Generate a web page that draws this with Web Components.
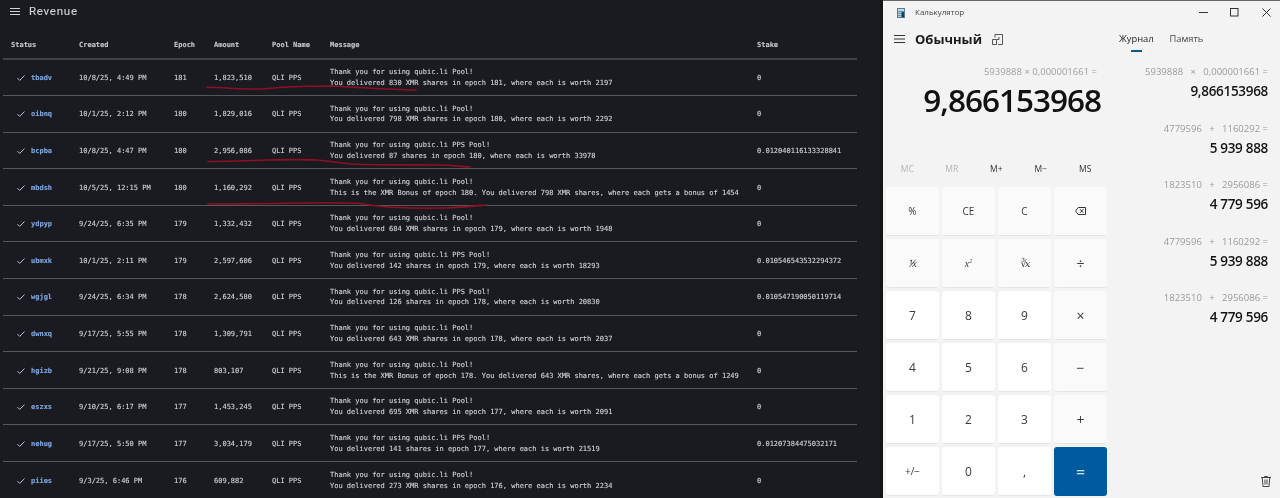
<!DOCTYPE html>
<html>
<head>
<meta charset="utf-8">
<title>Revenue</title>
<style>
  html, body { margin: 0; padding: 0; height: 100%; overflow: hidden; background: #141518; }
  body { display: flex; width: 1280px; height: 498px; }
</style>
</head>
<body>
<rev-panel>
  <rev-row status="tbadv" created="10/8/25, 4:49 PM" epoch="181" amount="1,823,510" stake="0">Thank you for using qubic.li Pool!<br>You delivered 830 XMR shares in epoch 181, where each is worth 2197</rev-row>
  <rev-row status="oibnq" created="10/1/25, 2:12 PM" epoch="180" amount="1,829,016" stake="0">Thank you for using qubic.li Pool!<br>You delivered 798 XMR shares in epoch 180, where each is worth 2292</rev-row>
  <rev-row status="bcpba" created="10/8/25, 4:47 PM" epoch="180" amount="2,956,086" stake="0.012040116133328841">Thank you for using qubic.li PPS Pool!<br>You delivered 87 shares in epoch 180, where each is worth 33978</rev-row>
  <rev-row status="mbdsh" created="10/5/25, 12:15 PM" epoch="180" amount="1,160,292" stake="0">Thank you for using qubic.li Pool!<br>This is the XMR Bonus of epoch 180. You delivered 798 XMR shares, where each gets a bonus of 1454</rev-row>
  <rev-row status="ydpyp" created="9/24/25, 6:35 PM" epoch="179" amount="1,332,432" stake="0">Thank you for using qubic.li Pool!<br>You delivered 684 XMR shares in epoch 179, where each is worth 1948</rev-row>
  <rev-row status="ubmxk" created="10/1/25, 2:11 PM" epoch="179" amount="2,597,606" stake="0.010546543532294372">Thank you for using qubic.li PPS Pool!<br>You delivered 142 shares in epoch 179, where each is worth 18293</rev-row>
  <rev-row status="wgjgl" created="9/24/25, 6:34 PM" epoch="178" amount="2,624,580" stake="0.010547190050119714">Thank you for using qubic.li PPS Pool!<br>You delivered 126 shares in epoch 178, where each is worth 20830</rev-row>
  <rev-row status="dwnxq" created="9/17/25, 5:55 PM" epoch="178" amount="1,309,791" stake="0">Thank you for using qubic.li Pool!<br>You delivered 643 XMR shares in epoch 178, where each is worth 2037</rev-row>
  <rev-row status="hgizb" created="9/21/25, 9:08 PM" epoch="178" amount="803,107" stake="0">Thank you for using qubic.li Pool!<br>This is the XMR Bonus of epoch 178. You delivered 643 XMR shares, where each gets a bonus of 1249</rev-row>
  <rev-row status="eszxs" created="9/10/25, 6:17 PM" epoch="177" amount="1,453,245" stake="0">Thank you for using qubic.li Pool!<br>You delivered 695 XMR shares in epoch 177, where each is worth 2091</rev-row>
  <rev-row status="nehug" created="9/17/25, 5:50 PM" epoch="177" amount="3,034,179" stake="0.01207384475032171">Thank you for using qubic.li PPS Pool!<br>You delivered 141 shares in epoch 177, where each is worth 21519</rev-row>
  <rev-row status="piies" created="9/3/25, 6:46 PM" epoch="176" amount="609,882" stake="0">Thank you for using qubic.li Pool!<br>You delivered 273 XMR shares in epoch 176, where each is worth 2234</rev-row>
</rev-panel>
<calc-panel>
  <calc-key kind="fn">%</calc-key>
  <calc-key kind="fn">CE</calc-key>
  <calc-key kind="fn">C</calc-key>
  <calc-key kind="fn"><svg width="11" height="8" viewBox="0 0 11 8" fill="none" stroke="#333" stroke-width="1"><path d="M3.2.5h7.3v7H3.2L.6 4z"/><path d="M5 2.2l3.4 3.6M8.4 2.2L5 5.8"/></svg></calc-key>
  <calc-key kind="fn"><span style="font:italic 10px 'Liberation Serif',serif">&#8543;x</span></calc-key>
  <calc-key kind="fn"><span style="font:italic 10px 'Liberation Serif',serif">x<sup style="font-size:6px;line-height:0">2</sup></span></calc-key>
  <calc-key kind="fn"><span style="font:italic 10px 'DejaVu Serif',serif;letter-spacing:-2px">&#8731;x</span></calc-key>
  <calc-key kind="op">&#247;</calc-key>
  <calc-key kind="num">7</calc-key>
  <calc-key kind="num">8</calc-key>
  <calc-key kind="num">9</calc-key>
  <calc-key kind="op">&#215;</calc-key>
  <calc-key kind="num">4</calc-key>
  <calc-key kind="num">5</calc-key>
  <calc-key kind="num">6</calc-key>
  <calc-key kind="op">&#8722;</calc-key>
  <calc-key kind="num">1</calc-key>
  <calc-key kind="num">2</calc-key>
  <calc-key kind="num">3</calc-key>
  <calc-key kind="op">+</calc-key>
  <calc-key kind="num"><span style="font-size:10px">+/&#8722;</span></calc-key>
  <calc-key kind="num">0</calc-key>
  <calc-key kind="num">,</calc-key>
  <calc-key kind="eq">=</calc-key>
  <calc-history slot="history" expr="5939888&#160;&#160;&#160;&#215;&#160;&#160;&#160;0,000001661 =" value="9,866153968"></calc-history>
  <calc-history slot="history" expr="4779596&#160;&#160;&#160;+&#160;&#160;&#160;1160292 =" value="5 939 888"></calc-history>
  <calc-history slot="history" expr="1823510&#160;&#160;&#160;+&#160;&#160;&#160;2956086 =" value="4 779 596"></calc-history>
  <calc-history slot="history" expr="4779596&#160;&#160;&#160;+&#160;&#160;&#160;1160292 =" value="5 939 888"></calc-history>
  <calc-history slot="history" expr="1823510&#160;&#160;&#160;+&#160;&#160;&#160;2956086 =" value="4 779 596"></calc-history>
</calc-panel>
<script>
const COLS = '68px 95px 40px 58px 58px 427px 108px';

class RevPanel extends HTMLElement {
  connectedCallback() {
    this.attachShadow({ mode: 'open' });
    this.shadowRoot.innerHTML = `
      <style>
        :host { display: block; position: relative; width: 880px; height: 498px; flex: none; background: #1a1b20;
          color: #cfd2d6; font: 7px "DejaVu Sans Mono", "Liberation Mono", monospace; -webkit-text-stroke: .12px currentColor;
          overflow: hidden; filter: blur(.3px); }
        .top { display: flex; align-items: center; gap: 9px; height: 22px; padding-left: 10px; }
        .top span { font: 11.5px Roboto, sans-serif; letter-spacing: .75px; color: #d0d3d7; }
        .head { display: grid; grid-template-columns: ${COLS}; align-items: center; box-sizing: border-box; height: 37.5px;
          margin: 0 23px 0 3px; padding-top: 11px; border-bottom: 2px solid #404246; color: #c4c7cb; font-weight: bold; }
        .head div { padding-left: 8px; }
        .marks { position: absolute; left: 0; top: 0; pointer-events: none; }
      </style>
      <div class="top">
        <svg width="10" height="7" viewBox="0 0 10 7"><path d="M0 .5h10M0 3.5h10M0 6.5h10" stroke="#d0d2d5" stroke-width="1"/></svg>
        <span>Revenue</span>
      </div>
      <div class="head">
        <div>Status</div><div>Created</div><div>Epoch</div><div>Amount</div><div>Pool Name</div><div>Message</div><div>Stake</div>
      </div>
      <slot></slot>
      <svg class="marks" width="880" height="498" fill="none" stroke="#8f1024" stroke-width="1.6" stroke-linecap="round">
        <path d="M207 87.3C225 87.5 245 89.5 262 89C285 86.5 310 86 330 86C360 87.5 390 90 416 90"/>
        <path d="M208 161.5C230 161.5 250 160.5 267 160C290 159.5 305 159.5 317 160C335 161.5 345 164 353 164C385 165.5 420 164.5 440 165C455 165.5 462 166.5 470 167"/>
        <path d="M208 204C240 204 270 203.5 300 203C325 202.5 345 202.5 360 203.5C375 206 390 207.5 400 207.5C420 208.5 435 208 445 208C460 207.5 475 206 486 205"/>
      </svg>`;
  }
}

class RevRow extends HTMLElement {
  connectedCallback() {
    const a = n => this.getAttribute(n);
    this.attachShadow({ mode: 'open' });
    this.shadowRoot.innerHTML = `
      <style>
        :host { display: grid; grid-template-columns: ${COLS}; align-items: center; box-sizing: border-box;
          height: 36.6px; margin: 0 23px 0 3px; padding-top: 1px; border-bottom: 1px solid #55575b; }
        :host(:last-child) { border-bottom: 0; }
        .c { padding-left: 8px; white-space: nowrap; }
        .status { display: flex; align-items: center; gap: 6px; padding-left: 14px; color: #7fa6de; font-weight: bold; }
        .msg { line-height: 10.7px; }
      </style>
      <div class="c status"><svg width="8" height="6" viewBox="0 0 8 6" fill="none"><path d="M.5 3.2L2.7 5.4L7.5.6" stroke="#b9c8dc" stroke-width="1"/></svg>${a('status')}</div>
      <div class="c">${a('created')}</div>
      <div class="c">${a('epoch')}</div>
      <div class="c">${a('amount')}</div>
      <div class="c">QLI PPS</div>
      <div class="c msg"><slot></slot></div>
      <div class="c">${a('stake')}</div>`;
  }
}

class CalcKey extends HTMLElement {
  connectedCallback() {
    this.attachShadow({ mode: 'open' });
    this.shadowRoot.innerHTML = `
      <style>
        :host { display: flex; align-items: center; justify-content: center; box-sizing: border-box; border-radius: 3px;
          background: #fafafa; color: #3a3a3a; font: 10px "Open Sans", sans-serif; border-bottom: 1px solid #e4e4e4; }
        :host([kind=num]) { background: #fff; font-size: 12px; }
        :host([kind=op]) { font-size: 14px; }
        :host([kind=eq]) { background: #005a9e; color: #cfe3f2; font-size: 16px; border-bottom: 0; }
      </style>
      <slot></slot>`;
  }
}

class CalcHistory extends HTMLElement {
  connectedCallback() {
    this.attachShadow({ mode: 'open' });
    this.shadowRoot.innerHTML = `
      <style>
        :host { display: block; height: 56.5px; text-align: right; white-space: nowrap; }
        .e { font-size: 9.5px; line-height: 14px; color: #9a9a9a; }
        .v { font-size: 13.5px; font-weight: 600; letter-spacing: -.3px; line-height: 24px; color: #141414; }
      </style>
      <div class="e">${this.getAttribute('expr')}</div>
      <div class="v">${this.getAttribute('value')}</div>`;
  }
}

class CalcPanel extends HTMLElement {
  connectedCallback() {
    this.attachShadow({ mode: 'open' });
    this.shadowRoot.innerHTML = `
      <style>
        :host { display: block; position: relative; flex: none; width: 397px; height: 498px; margin-left: 3px; box-sizing: border-box;
          background: #f3f3f3; color: #111; font: 10px "Open Sans", sans-serif; border-top: 1px solid #666; overflow: hidden; filter: blur(.25px); }
        .title { display: flex; align-items: center; height: 23px; padding-left: 14px; font-size: 8px; color: #444; }
        .title .name { margin-left: 10px; margin-top: -2px; }
        .win { display: flex; margin-left: auto; margin-right: -2px; }
        .win div { width: 31.5px; display: flex; justify-content: center; align-items: center; height: 23px; }
        .body { display: grid; grid-template-columns: 227px 170px; }
        .head { display: flex; align-items: center; height: 30px; padding-left: 11px; }
        .head b { margin-left: 10px; font-size: 13px; font-weight: 700; color: #1a1a1a; }
        .head svg + b + svg { margin-left: 10px; }
        .expr { padding-right: 13px; margin-top: 11px; text-align: right; font-size: 9.5px; line-height: 14px; color: #a0a0a0; }
        .disp { padding-right: 9px; text-align: right; font-size: 31.5px; font-weight: 600; letter-spacing: -1px; line-height: 42px; color: #111; }
        .mem { display: grid; grid-template-columns: repeat(5, 44.5px); margin: 37px 0 0 2px; height: 20px; align-items: center;
          text-align: center; font-size: 8.5px; color: #333; }
        .mem .off { color: #b4b4b4; }
        .keys { display: grid; grid-template-columns: repeat(4, 53px); grid-template-rows: repeat(6, 49px); gap: 3px;
          padding: 9px 0 0 3px; }
        .side { position: relative; }
        .tabs { display: flex; gap: 16px; height: 28px; align-items: center; padding-left: 9px; font-size: 9.3px; color: #444; }
        .tabs .on { position: relative; color: #222; }
        .tabs .on::after { content: ""; position: absolute; left: 12px; width: 11px; height: 2px; bottom: -7px; background: #005a9e; }
        .hist { margin-top: 13px; padding-right: 12px; }
        .trash { position: absolute; right: 9px; bottom: 9px; }
      </style>
      <div class="title">
        <svg width="8" height="10" viewBox="0 0 8 10"><rect width="8" height="10" rx=".5" fill="#4f7f96"/><rect x="1" y="1" width="6" height="2.2" fill="#bcd8e6"/><rect x="5" y="4.2" width="2" height="5" fill="#173d55"/><path d="M1 4.7h3M1 6.5h3M1 8.3h3" stroke="#dce8ee" stroke-width=".9"/></svg>
        <span class="name">Калькулятор</span>
        <div class="win">
          <div><svg width="9" height="9" viewBox="0 0 9 9"><path d="M0 4.5h9" stroke="#333"/></svg></div>
          <div><svg width="9" height="9" viewBox="0 0 9 9"><rect x=".5" y=".5" width="7.5" height="7.5" fill="none" stroke="#333"/></svg></div>
          <div><svg width="9" height="9" viewBox="0 0 9 9"><path d="M.5.5l8 8M8.5.5l-8 8" stroke="#333"/></svg></div>
        </div>
      </div>
      <div class="body">
        <div>
          <div class="head">
            <svg width="11" height="8" viewBox="0 0 11 8"><path d="M0 .5h11M0 4h11M0 7.5h11" stroke="#333"/></svg>
            <b>Обычный</b>
            <svg width="11" height="11" viewBox="0 0 11 11" fill="none" stroke="#444" stroke-width=".9"><path d="M3 .5h7.5v10H6M3 .5v3M.5 5.5h4v5h-4zM7 3v2.5H5"/></svg>
          </div>
          <div class="expr">5939888 × 0,000001661 =</div>
          <div class="disp">9,866153968</div>
          <div class="mem"><span class="off">MC</span><span class="off">MR</span><span>M+</span><span>M−</span><span>MS</span></div>
          <div class="keys"><slot></slot></div>
        </div>
        <div class="side">
          <div class="tabs"><span class="on">Журнал</span><span>Память</span></div>
          <div class="hist"><slot name="history"></slot></div>
          <svg class="trash" width="10" height="11" viewBox="0 0 10 11" fill="none" stroke="#333" stroke-width=".9"><path d="M0 1.5h10M3.5 1.5V.5h3v1M1.2 1.5l.8 9h6l.8-9M4 3.5v5M6 3.5v5"/></svg>
        </div>
      </div>`;
  }
}

customElements.define('rev-panel', RevPanel);
customElements.define('rev-row', RevRow);
customElements.define('calc-key', CalcKey);
customElements.define('calc-history', CalcHistory);
customElements.define('calc-panel', CalcPanel);
</script>
</body>
</html>
